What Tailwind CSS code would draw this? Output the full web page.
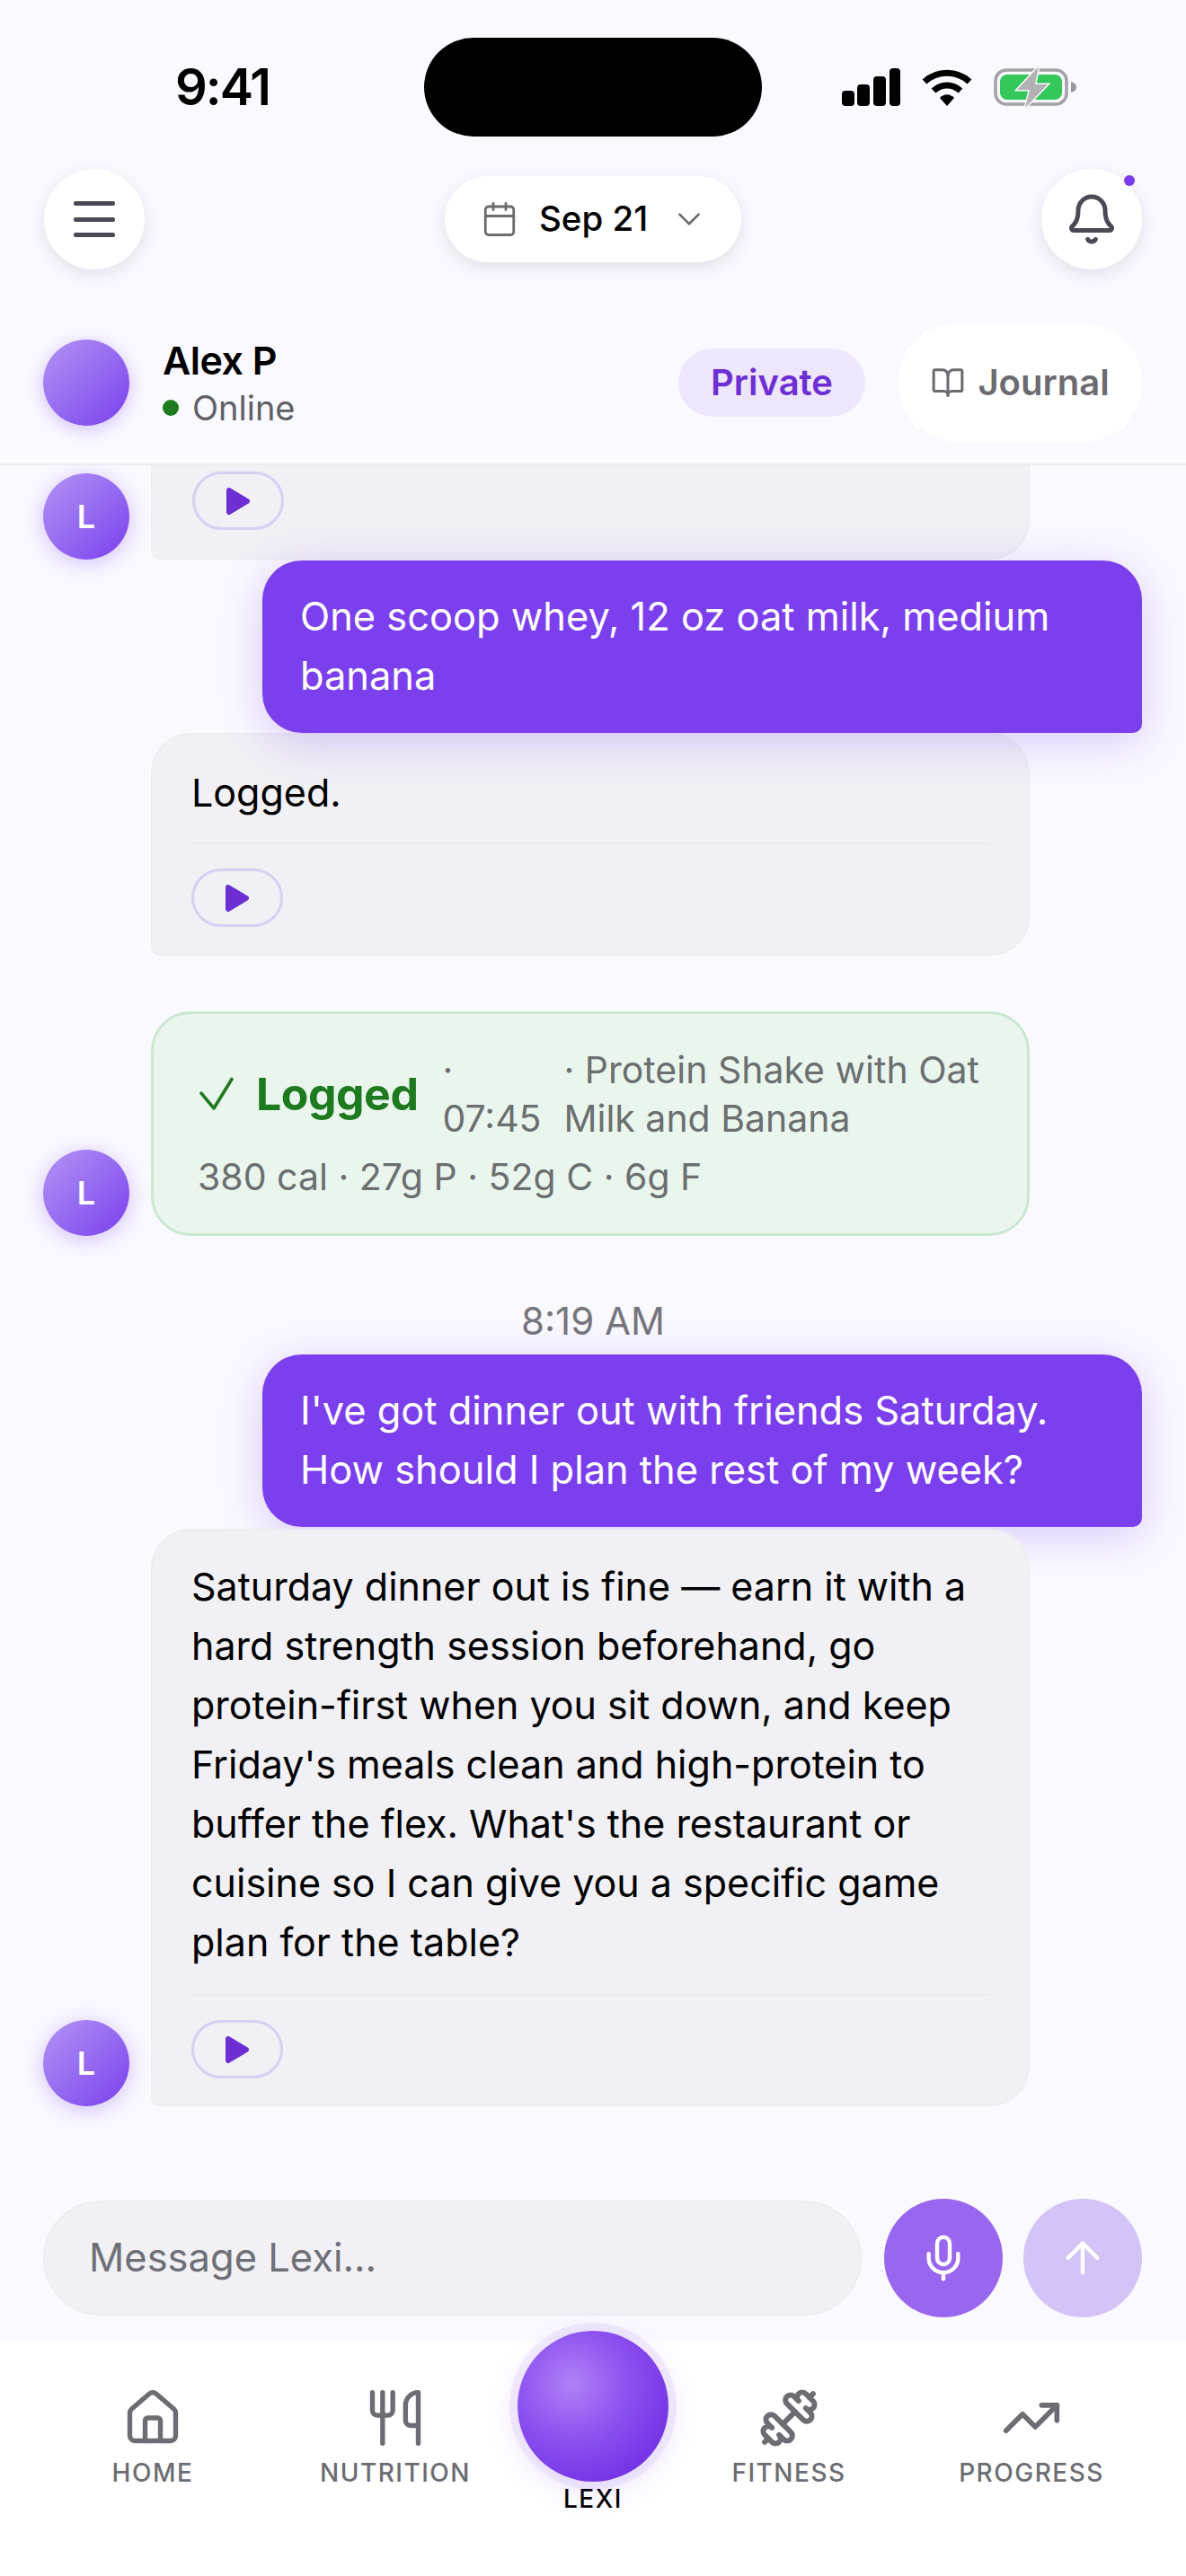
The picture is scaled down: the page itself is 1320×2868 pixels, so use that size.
<!DOCTYPE html>
<html lang="en">
<head>
<meta charset="UTF-8" />
<title>Lexi chat</title>
<script src="https://cdn.jsdelivr.net/npm/@tailwindcss/browser@4"></script>
</head>
<body class="bg-[#faf9ff]">
<div class="w-[1320px] h-[2868px] flex flex-col overflow-hidden relative bg-[#faf9ff] font-['Inter',sans-serif] text-black">

  <!-- status bar -->
  <div class="flex items-center h-[110px] mt-[42px] shrink-0 pl-[195px]">
    <div class="w-[277px] text-[56px] font-semibold leading-none tracking-[-2px]">9:41</div>
    <div class="w-[376px] h-[110px] rounded-full bg-black"></div>
    <svg class="ml-[89px]" width="65" height="42" viewBox="0 0 65 42" fill="#000"><rect x="0" y="25" width="14" height="17" rx="4"/><rect x="17" y="18" width="14" height="24" rx="4"/><rect x="35" y="9" width="14" height="33" rx="4"/><rect x="53" y="0" width="12" height="42" rx="4"/></svg>
    <svg class="ml-[23px]" width="58" height="42" viewBox="0 0 58 42" fill="none"><path d="M4 15 C18 2 40 2 54 15" stroke="#000" stroke-width="7"/><path d="M14 25 C23 17 35 17 44 25" stroke="#000" stroke-width="7"/><path d="M21 33 C26 28 32 28 37 33 L29 42 Z" fill="#000"/></svg>
    <svg class="ml-[23px]" width="94" height="46" viewBox="0 0 94 46" fill="none"><rect x="2" y="4" width="79" height="38" rx="12" stroke="#a3a3a6" stroke-width="3.5"/><rect x="7" y="9" width="69" height="28" rx="8" fill="#34c759"/><path d="M86 17c4 1 6 3 6 6s-2 5-6 6z" fill="#98989b"/><path d="M50 0 L26 26 H40 L35 46 L60 20 H46 Z" fill="#b2b2b5" stroke="#faf9ff" stroke-width="3" paint-order="stroke"/></svg>
  </div>

  <!-- toolbar -->
  <div class="flex items-center justify-between h-[112px] mt-[36px] px-[49px] shrink-0">
    <div class="w-[112px] h-[112px] rounded-full bg-white shadow-[0_6px_20px_rgba(0,0,0,0.10)] flex items-center justify-center">
      <svg width="46" height="40" viewBox="0 0 46 40" fill="#4a4a55"><rect y="0" width="46" height="5" rx="2"/><rect y="18" width="46" height="5" rx="2"/><rect y="35" width="46" height="5" rx="2"/></svg>
    </div>
    <div class="w-[330px] h-[96px] rounded-full bg-white shadow-[0_6px_20px_rgba(0,0,0,0.10)] flex items-center pl-[40px]">
      <svg width="42" height="42" viewBox="0 0 24 24" fill="none" stroke="#6b6b70" stroke-width="1.6" stroke-linecap="round" stroke-linejoin="round"><path d="M8 2v4"/><path d="M16 2v4"/><rect width="18" height="18" x="3" y="4" rx="2"/><path d="M3 10h18"/></svg>
      <span class="ml-[23px] w-[125px] text-[38.5px] font-medium">Sep 21</span>
      <svg class="ml-[21px]" width="42" height="42" viewBox="0 0 24 24" fill="none" stroke="#6b6b70" stroke-width="1.5" stroke-linecap="round" stroke-linejoin="round"><path d="m6 9 6 6 6-6"/></svg>
    </div>
    <div class="relative w-[112px] h-[112px] rounded-full bg-white shadow-[0_6px_20px_rgba(0,0,0,0.10)] flex items-center justify-center">
      <svg width="60" height="60" viewBox="0 0 24 24" fill="none" stroke="#4a4a55" stroke-width="2" stroke-linecap="round" stroke-linejoin="round"><path d="M10.268 21a2 2 0 0 0 3.464 0"/><path d="M3.262 15.326A1 1 0 0 0 4 17h16a1 1 0 0 0 .74-1.673C19.41 13.956 18 12.499 18 8A6 6 0 0 0 6 8c0 4.499-1.411 5.956-2.738 7.326"/></svg>
      <div class="absolute right-[8px] top-[7px] w-[12px] h-[12px] rounded-full bg-[#7c3aed]"></div>
    </div>
  </div>

  <!-- contact header -->
  <div class="flex items-center h-[218px] pt-[60px] pb-[24px] pl-[48px] pr-[49px] border-b-2 border-[#ececf1] shrink-0">
    <div class="w-[96px] h-[96px] rounded-full bg-gradient-to-br from-[#b492f4] to-[#7c3aed] shadow-[0_4px_20px_rgba(124,58,237,0.3)]"></div>
    <div class="ml-[37px] flex flex-col">
      <div class="text-[43px] font-semibold leading-[56px] tracking-[-0.5px]">Alex P</div>
      <div class="flex items-center text-[38px] leading-[50px] text-[#5f5f66]"><span class="w-[18px] h-[18px] rounded-full bg-[#1e7a1e] mr-[15px]"></span>Online</div>
    </div>
    <div class="ml-auto w-[208px] h-[76px] rounded-full bg-[#eee6fd] text-[#6d2fd3] text-[40px] font-semibold flex items-center justify-center">Private</div>
    <div class="ml-[37px] w-[271px] h-[132px] rounded-full bg-white text-[#6b6b70] text-[40px] font-semibold flex items-center justify-center">
      <svg class="mr-[14px]" width="38" height="38" viewBox="0 0 24 24" fill="none" stroke="#6b6b70" stroke-width="1.9" stroke-linecap="round" stroke-linejoin="round"><path d="M12 7v14"/><path d="M3 18a1 1 0 0 1-1-1V4a1 1 0 0 1 1-1h5a4 4 0 0 1 4 4 4 4 0 0 1 4-4h5a1 1 0 0 1 1 1v13a1 1 0 0 1-1 1h-6a3 3 0 0 0-3 3 3 3 0 0 0-3-3z"/></svg>
      Journal
    </div>
  </div>

  <!-- messages -->
  <div class="flex-1 flex flex-col overflow-hidden min-h-0">
    <div class="flex items-end pl-[48px] h-[105px] shrink-0">
      <div class="w-[96px] h-[96px] rounded-full bg-gradient-to-br from-[#b492f4] to-[#7c3aed] shadow-[0_4px_24px_rgba(124,58,237,0.3)] flex items-center justify-center text-white text-[36px] font-semibold">L</div>
      <div class="ml-[24px] w-[978px] h-[105px] bg-[#f1f0f5] border-2 border-t-0 border-[#ececf1] rounded-br-[44px] rounded-bl-[10px] pl-[44px] pt-[7px]">
        <div class="w-[102px] h-[65px] rounded-full border-[3px] border-[#d8cff2] flex items-center justify-center">
          <svg width="28" height="32" viewBox="0 0 28 32" fill="#6d2fd3" stroke="#6d2fd3" stroke-width="6" stroke-linejoin="round"><path d="M4 4 L24 16 L4 28 Z"/></svg>
        </div>
      </div>
    </div>

    <div class="self-end mr-[49px] w-[979px] h-[192px] mt-px bg-[#7c3fee] text-white text-[43.4px] leading-[66px] rounded-[44px] rounded-br-[10px] px-[42px] pt-[29px] shadow-[0_10px_50px_rgba(124,58,237,0.25)] relative shrink-0">One scoop whey, 12 oz oat milk, medium banana</div>

    <div class="ml-[168px] w-[978px] h-[248px] shrink-0 bg-[#f1f0f5] border-2 border-[#ececf1] rounded-[44px] rounded-bl-[10px] px-[43px] pt-[31px]">
      <div class="text-[43px] leading-[66px]">Logged.</div>
      <div class="mt-[23px] border-t-2 border-[#ebebef] pt-[27px]">
        <div class="w-[102px] h-[65px] rounded-full border-[3px] border-[#d8cff2] flex items-center justify-center">
          <svg width="28" height="32" viewBox="0 0 28 32" fill="#6d2fd3" stroke="#6d2fd3" stroke-width="6" stroke-linejoin="round"><path d="M4 4 L24 16 L4 28 Z"/></svg>
        </div>
      </div>
    </div>

    <div class="flex items-end pl-[48px] mt-[62px] shrink-0">
      <div class="w-[96px] h-[96px] rounded-full bg-gradient-to-br from-[#b492f4] to-[#7c3aed] shadow-[0_4px_24px_rgba(124,58,237,0.3)] flex items-center justify-center text-white text-[36px] font-semibold">L</div>
      <div class="ml-[24px] w-[978px] h-[250px] bg-[#eaf5ee] border-[3px] border-[#c9e8d0] rounded-[44px] pl-[49px] pr-[38px] pt-[35px]">
        <div class="flex items-center text-[41px] leading-[54px] text-[#6b6f70]">
          <svg class="shrink-0" width="44" height="44" viewBox="0 0 24 24" fill="none" stroke="#1e7a1e" stroke-width="2" stroke-linecap="round" stroke-linejoin="round"><path d="M2.2 11.5 L9.8 20.7 L20.7 3"/></svg>
          <span class="ml-[21px] text-[50px] font-bold text-[#1e7a1e] shrink-0 tracking-[-0.5px]">Logged</span>
          <span class="ml-[27px] w-[112px] shrink-0">· 07:45</span>
          <span class="ml-[23px] flex-1">· Protein Shake with Oat Milk and Banana</span>
        </div>
        <div class="mt-[11px] text-[41px] leading-[54px] text-[#6b6f70]">380 cal · 27g P · 52g C · 6g F</div>
      </div>
    </div>

    <div class="mt-[73px] h-[44px] shrink-0 text-center text-[42px] leading-[44px] text-[#76767c]">8:19 AM</div>

    <div class="self-end mr-[49px] w-[979px] h-[192px] mt-[15px] bg-[#7c3fee] text-white text-[43.4px] leading-[66px] rounded-[44px] rounded-br-[10px] px-[42px] pt-[29px] shadow-[0_10px_50px_rgba(124,58,237,0.25)] shrink-0">I've got dinner out with friends Saturday. How should I plan the rest of my week?</div>

    <div class="flex items-end pl-[48px] mt-[2px] shrink-0">
      <div class="w-[96px] h-[96px] rounded-full bg-gradient-to-br from-[#b492f4] to-[#7c3aed] shadow-[0_4px_24px_rgba(124,58,237,0.3)] flex items-center justify-center text-white text-[36px] font-semibold">L</div>
      <div class="ml-[24px] w-[978px] h-[643px] bg-[#f1f0f5] border-2 border-[#ececf1] rounded-[44px] rounded-bl-[10px] px-[43px] pt-[29px]">
        <div class="text-[43px] leading-[66px]">Saturday dinner out is fine — earn it with a hard strength session beforehand, go protein-first when you sit down, and keep Friday's meals clean and high-protein to buffer the flex. What's the restaurant or cuisine so I can give you a specific game plan for the table?</div>
        <div class="mt-[25px] border-t-2 border-[#ebebef] pt-[27px]">
          <div class="w-[102px] h-[65px] rounded-full border-[3px] border-[#d8cff2] flex items-center justify-center">
            <svg width="28" height="32" viewBox="0 0 28 32" fill="#6d2fd3" stroke="#6d2fd3" stroke-width="6" stroke-linejoin="round"><path d="M4 4 L24 16 L4 28 Z"/></svg>
          </div>
        </div>
      </div>
    </div>
  </div>

  <!-- composer -->
  <div class="flex items-center h-[132px] pl-[48px] pr-[49px] mb-[26px] shrink-0">
    <div class="w-[912px] h-[128px] rounded-full bg-[#f1f0f5] border-2 border-[#ececf1] flex items-center pl-[49px] text-[43.5px] text-[#6f6f76]">Message Lexi...</div>
    <div class="ml-[25px] w-[132px] h-[132px] rounded-full bg-[#9966f0] flex items-center justify-center">
      <svg width="56" height="56" viewBox="0 0 24 24" fill="none" stroke="#fff" stroke-width="1.9" stroke-linecap="round" stroke-linejoin="round"><path d="M12 19v3"/><path d="M19 10v2a7 7 0 0 1-14 0v-2"/><rect x="9" y="2" width="6" height="13" rx="3"/></svg>
    </div>
    <div class="ml-[23px] w-[132px] h-[132px] rounded-full bg-[#d4c3f7] flex items-center justify-center">
      <svg width="56" height="56" viewBox="0 0 24 24" fill="none" stroke="#fff" stroke-width="1.9" stroke-linecap="round" stroke-linejoin="round"><path d="m5 12 7-7 7 7"/><path d="M12 19V5"/></svg>
    </div>
  </div>

  <!-- bottom nav -->
  <div class="relative flex h-[262px] bg-white shrink-0 text-[28px] tracking-[1.5px] text-[#6b6d72] font-medium">
    <div class="w-[340px] flex flex-col items-center pt-[52px]">
      <svg width="68" height="68" viewBox="0 0 24 24" fill="none" stroke="#6b6d72" stroke-width="1.9" stroke-linecap="round" stroke-linejoin="round"><path d="M15 21v-8a1 1 0 0 0-1-1h-4a1 1 0 0 0-1 1v8"/><path d="M3 10a2 2 0 0 1 .709-1.528l7-5.999a2 2 0 0 1 2.582 0l7 5.999A2 2 0 0 1 21 10v9a2 2 0 0 1-2 2H5a2 2 0 0 1-2-2z"/></svg>
      <span class="mt-[9px] leading-[36px]">HOME</span>
    </div>
    <div class="w-[200px] flex flex-col items-center pt-[52px]">
      <svg width="68" height="68" viewBox="0 0 24 24" fill="none" stroke="#6b6d72" stroke-width="1.9" stroke-linecap="round" stroke-linejoin="round"><path d="M3 2v7c0 1.1.9 2 2 2h4a2 2 0 0 0 2-2V2"/><path d="M7 2v20"/><path d="M21 15V2a5 5 0 0 0-5 5v6c0 1.1.9 2 2 2h3Zm0 0v7"/></svg>
      <span class="mt-[9px] leading-[36px]">NUTRITION</span>
    </div>
    <div class="w-[240px] flex flex-col items-center justify-start">
      <div class="absolute left-[576px] top-[-11px] w-[168px] h-[168px] rounded-full bg-[radial-gradient(circle_at_36%_35%,#b081f6,#8d52f0_40%,#7535e6_75%,#6a2dd6)] shadow-[0_0_0_9px_rgba(124,58,237,0.08),0_8px_36px_rgba(124,58,237,0.16)]"></div>
      <span class="mt-[158px] leading-[36px] text-black">LEXI</span>
    </div>
    <div class="w-[196px] flex flex-col items-center pt-[52px]">
      <svg class="-scale-x-100" width="68" height="68" viewBox="0 0 24 24" fill="none" stroke="#6b6d72" stroke-width="2.1" stroke-linecap="round" stroke-linejoin="round"><path d="M14.4 14.4 9.6 9.6"/><path d="M18.657 21.485a2 2 0 1 1-2.829-2.828l-1.767 1.768a2 2 0 1 1-2.829-2.829l6.364-6.364a2 2 0 1 1 2.829 2.829l-1.768 1.767a2 2 0 1 1 2.828 2.829z"/><path d="m21.5 21.5-1.4-1.4"/><path d="M3.9 3.9 2.5 2.5"/><path d="M6.404 12.768a2 2 0 1 1-2.829-2.829l1.768-1.767a2 2 0 1 1-2.828-2.829l2.828-2.828a2 2 0 1 1 2.829 2.828l1.767-1.768a2 2 0 1 1 2.829 2.829z"/></svg>
      <span class="mt-[9px] leading-[36px]">FITNESS</span>
    </div>
    <div class="w-[344px] flex flex-col items-center pt-[52px]">
      <svg width="68" height="68" viewBox="0 0 24 24" fill="none" stroke="#6b6d72" stroke-width="2" stroke-linecap="round" stroke-linejoin="round"><path d="M16 7h6v6"/><path d="m22 7-8.5 8.5-5-5L2 17"/></svg>
      <span class="mt-[9px] leading-[36px]">PROGRESS</span>
    </div>
  </div>
</div>
</body>
</html>
